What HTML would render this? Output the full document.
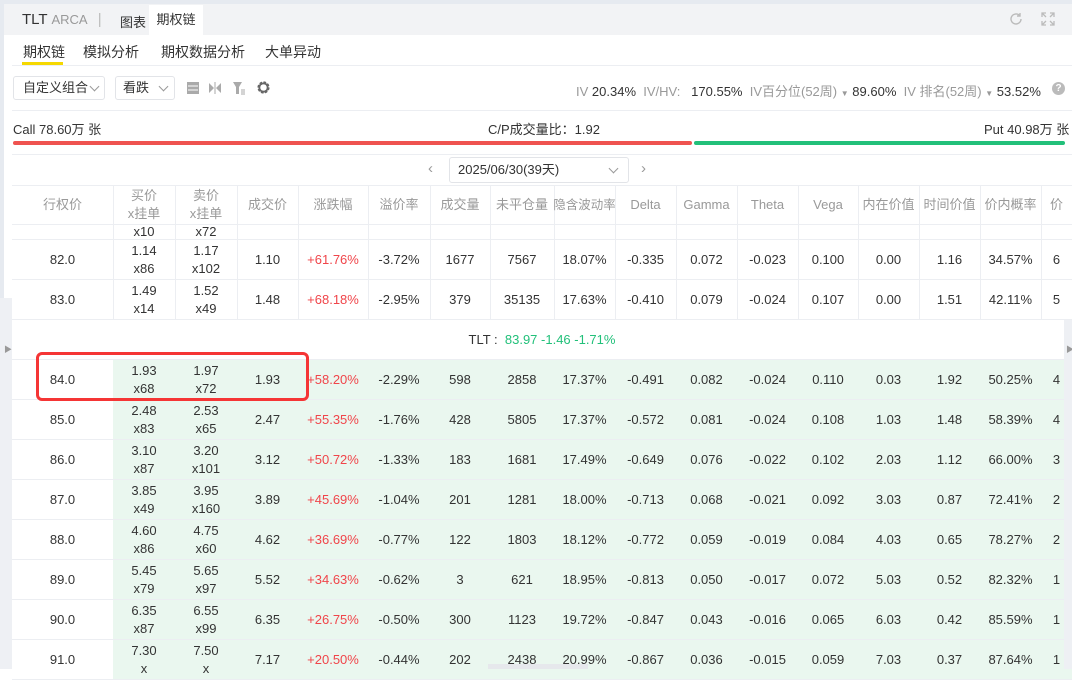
<!DOCTYPE html>
<html><head><meta charset="utf-8"><style>
*{margin:0;padding:0;box-sizing:border-box}
body{width:1072px;height:669px;overflow:hidden;background:#fff;font-family:"Liberation Sans","Noto Sans CJK SC",sans-serif;font-size:13px;color:#333;position:relative}
.a{position:absolute}
.t{position:absolute;top:0;display:flex;flex-direction:column;justify-content:center;align-items:center;text-align:center;line-height:18px;height:100%;white-space:nowrap}
.row{position:absolute;left:12px;width:1060px;height:40px;border-bottom:1px solid #eceef2;overflow:hidden}
.g{background:#eaf7ef}
.vl{position:absolute;top:0;height:100%;width:1px;background:#eceef2}
.red{color:#f0454a}
.hd{color:#999}
.chev{display:inline-block;width:7px;height:7px;border-right:1px solid #999;border-bottom:1px solid #999;transform:rotate(45deg);position:absolute;top:6px}
</style></head><body>
<div class="a" style="left:0;top:0;width:1072px;height:4px;background:#e6eaf0"></div>
<div class="a" style="left:0;top:0;width:4px;height:669px;background:#e6eaf0"></div>
<div class="a" style="left:4px;top:4px;width:1068px;height:31px;background:#f2f3f5"></div>
<div class="a" style="left:22px;top:11px;font-size:15px;color:#333;white-space:nowrap">TLT <span style="font-size:13px;color:#999">ARCA</span> <span style="color:#bbb;margin-left:6px">|</span></div>
<div class="a" style="left:120px;top:12px">图表</div>
<div class="a" style="left:149px;top:5px;width:54px;height:30px;background:#fff;text-align:center;line-height:30px">期权链</div>
<svg class="a" style="left:1008px;top:11px" width="16" height="16" viewBox="0 0 16 16"><path d="M13 8a5 5 0 1 1-1.5-3.6" fill="none" stroke="#bbb" stroke-width="1.4"/><path d="M12 2v3h-3" fill="none" stroke="#bbb" stroke-width="1.4"/></svg>
<svg class="a" style="left:1040px;top:11px" width="16" height="16" viewBox="0 0 16 16" fill="none" stroke="#bbb" stroke-width="1.3"><path d="M2 6V2h4M2 2l4 4M14 6V2h-4M14 2l-4 4M2 10v4h4M2 14l4-4M14 10v4h-4M14 14l-4-4"/></svg>
<div class="a" style="left:23px;top:42px;font-size:14px">期权链</div>
<div class="a" style="left:22px;top:62px;width:41px;height:3px;background:#f5d800"></div>
<div class="a" style="left:83px;top:42px;font-size:14px">模拟分析</div>
<div class="a" style="left:161px;top:42px;font-size:14px">期权数据分析</div>
<div class="a" style="left:265px;top:42px;font-size:14px">大单异动</div>
<div class="a" style="left:12px;top:65px;width:1060px;height:1px;background:#eceef2"></div>
<div class="a" style="left:13px;top:76px;width:92px;height:24px;border:1px solid #e2e4e8;border-radius:3px;padding-left:9px;line-height:22px;white-space:nowrap">自定义组合<span class="chev" style="left:77px"></span></div>
<div class="a" style="left:115px;top:76px;width:60px;height:24px;border:1px solid #e2e4e8;border-radius:3px;padding-left:7px;line-height:22px;white-space:nowrap">看跌<span class="chev" style="left:44px"></span></div>
<svg class="a" style="left:186px;top:81px" width="14" height="14"><rect x="1" y="1" width="12" height="12" fill="#aaa"/><path d="M2 5h10M2 9h10" stroke="#fff"/></svg>
<svg class="a" style="left:208px;top:81px" width="14" height="14"><path d="M1 2l5 5-5 5zM13 2l-5 5 5 5z" fill="#aaa"/><path d="M7 1v12" stroke="#aaa"/></svg>
<svg class="a" style="left:232px;top:81px" width="14" height="14"><path d="M1 1h9L7 6v7H4V6z" fill="#aaa"/><path d="M9 9h4M9 11h4M9 13h4" stroke="#aaa"/></svg>
<svg class="a" style="left:256px;top:80px" width="15" height="15" viewBox="0 0 16 16"><circle cx="8" cy="8" r="5" fill="none" stroke="#666" stroke-width="3" stroke-dasharray="2.5 1.4"/><circle cx="8" cy="8" r="4.5" fill="none" stroke="#666" stroke-width="2"/></svg>
<div class="a" style="left:576px;top:81px;color:#999;white-space:nowrap">IV <span style="color:#333">20.34%</span>&nbsp; IV/HV: &nbsp;&nbsp;<span style="color:#333">170.55%</span>&nbsp; IV百分位(52周) <span style="font-size:8px">▼</span> <span style="color:#333">89.60%</span>&nbsp; IV 排名(52周) <span style="font-size:8px">▼</span> <span style="color:#333">53.52%</span></div>
<div class="a" style="left:1052px;top:82px;width:13px;height:13px;border-radius:50%;background:#bbb;color:#fff;font-size:10px;text-align:center;line-height:13px;font-weight:bold">?</div>
<div class="a" style="left:12px;top:110px;width:1060px;height:1px;background:#eceef2"></div>
<div class="a" style="left:13px;top:119px">Call 78.60万 张</div>
<div class="a" style="left:488px;top:119px">C/P成交量比：1.92</div>
<div class="a" style="left:984px;top:119px;white-space:nowrap">Put 40.98万 张</div>
<div class="a" style="left:13px;top:141px;width:679px;height:4px;background:#ef5350;border-radius:2px"></div>
<div class="a" style="left:694px;top:141px;width:371px;height:4px;background:#22c07a;border-radius:2px"></div>
<div class="a" style="left:12px;top:154px;width:1060px;height:1px;background:#eceef2"></div>
<div class="a" style="left:428px;top:160px;color:#999;font-size:15px">‹</div>
<div class="a" style="left:449px;top:157px;width:180px;height:26px;border:1px solid #e2e4e8;border-radius:3px;padding-left:8px;line-height:24px;white-space:nowrap">2025/06/30(39天)<span class="chev" style="left:160px;top:7px"></span></div>
<div class="a" style="left:641px;top:160px;color:#999;font-size:15px">›</div>
<div class="a" style="left:12px;top:185px;width:1060px;height:1px;background:#eceef2"></div>
<div id="tb"></div>
<div class="a" style="left:0;top:298px;width:12px;height:371px;background:#eef0f4"></div>
<div class="a" style="left:4px;top:344px;color:#999;font-size:8px">▶</div>
<div class="a" style="left:1064px;top:320px;width:8px;height:349px;background:#eef0f4"></div>
<div class="a" style="left:1066px;top:344px;color:#999;font-size:8px">▶</div>
<div class="a" style="left:36px;top:352px;width:273px;height:49px;border:3px solid #f53535;border-radius:6px"></div>
<div class="a" style="left:488px;top:664px;width:100px;height:5px;background:#e6e8ec"></div>
<script>
var X=[12,113,175,237,298,368,430,490,554,615,676,737,798,858,919,980,1041,1072];
var H=["行权价","买价<br>x挂单","卖价<br>x挂单","成交价","涨跌幅","溢价率","成交量","未平仓量","<span style='font-size:12.5px'>隐含波动率</span>","Delta","Gamma","Theta","Vega","内在价值","时间价值","价内概率","价"];
var R=[
["82.0","1.14<br>x86","1.17<br>x102","1.10","+61.76%","-3.72%","1677","7567","18.07%","-0.335","0.072","-0.023","0.100","0.00","1.16","34.57%","6"],
["83.0","1.49<br>x14","1.52<br>x49","1.48","+68.18%","-2.95%","379","35135","17.63%","-0.410","0.079","-0.024","0.107","0.00","1.51","42.11%","5"],
null,
["84.0","1.93<br>x68","1.97<br>x72","1.93","+58.20%","-2.29%","598","2858","17.37%","-0.491","0.082","-0.024","0.110","0.03","1.92","50.25%","4"],
["85.0","2.48<br>x83","2.53<br>x65","2.47","+55.35%","-1.76%","428","5805","17.37%","-0.572","0.081","-0.024","0.108","1.03","1.48","58.39%","4"],
["86.0","3.10<br>x87","3.20<br>x101","3.12","+50.72%","-1.33%","183","1681","17.49%","-0.649","0.076","-0.022","0.102","2.03","1.12","66.00%","3"],
["87.0","3.85<br>x49","3.95<br>x160","3.89","+45.69%","-1.04%","201","1281","18.00%","-0.713","0.068","-0.021","0.092","3.03","0.87","72.41%","2"],
["88.0","4.60<br>x86","4.75<br>x60","4.62","+36.69%","-0.77%","122","1803","18.12%","-0.772","0.059","-0.019","0.084","4.03","0.65","78.27%","2"],
["89.0","5.45<br>x79","5.65<br>x97","5.52","+34.63%","-0.62%","3","621","18.95%","-0.813","0.050","-0.017","0.072","5.03","0.52","82.32%","1"],
["90.0","6.35<br>x87","6.55<br>x99","6.35","+26.75%","-0.50%","300","1123","19.72%","-0.847","0.043","-0.016","0.065","6.03","0.42","85.59%","1"],
["91.0","7.30<br>x","7.50<br>x","7.17","+20.50%","-0.44%","202","2438","20.99%","-0.867","0.036","-0.015","0.059","7.03","0.37","87.64%","1"]];
function cells(vals,cls,green,vl){var s="";for(var i=0;i<17;i++){var l=X[i]-12,w=X[i+1]-X[i];
if(green&&i>0)s+='<div class="a g" style="left:'+l+'px;top:0;width:'+w+'px;height:100%"></div>';
if(vl&&i>0)s+='<div class="vl" style="left:'+l+'px"></div>';
if(vals)s+='<div class="t'+(cls?' '+cls:'')+(i==4&&!cls?' red':'')+'" style="left:'+l+'px;width:'+w+'px">'+vals[i]+'</div>';}return s;}
var h='<div class="row" style="top:186px;height:39px">'+cells(H,"hd",false,true)+'</div>';
h+='<div class="row" style="top:225px;height:15px">'+cells(null,"",false,true)+'<div class="t" style="left:101px;width:62px;top:-13px;height:40px">x10</div><div class="t" style="left:163px;width:62px;top:-13px;height:40px">x72</div></div>';
for(var r=0;r<R.length;r++){var yy=240+r*40;
if(!R[r]){h+='<div class="row" style="top:'+yy+'px"><div class="t" style="left:0;width:1060px;display:block;line-height:40px">TLT : <span style="color:#22c07a">&nbsp;83.97 -1.46 -1.71%</span></div></div>';continue;}
var g=r>=3;h+='<div class="row" style="top:'+yy+'px">'+cells(R[r],"",g,!g)+'</div>';}
document.getElementById("tb").outerHTML=h;
</script>
</body></html>
